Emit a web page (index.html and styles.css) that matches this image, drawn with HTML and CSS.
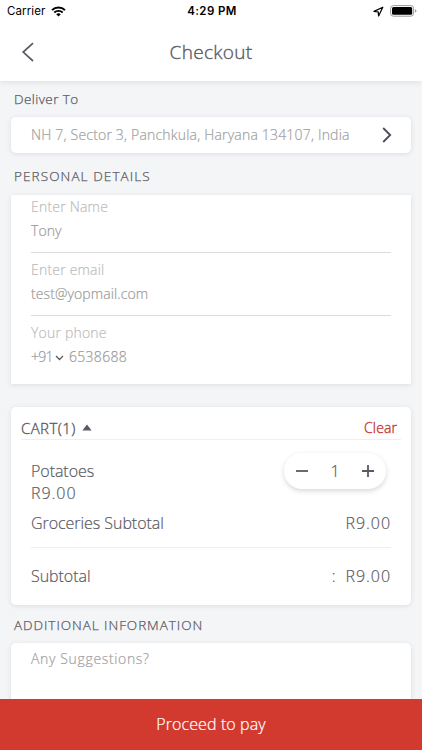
FILE: index.html
```
<!DOCTYPE html>
<html lang="en">
<head>
<meta charset="utf-8">
<meta name="viewport" content="width=device-width, initial-scale=1">
<title>Checkout</title>
<link rel="stylesheet" href="styles.css">
</head>
<body>
<div class="screen">
  <header class="header">
    <div class="status">
      <div class="status-left"><span class="carrier">Carrier</span>
        <svg class="wifi" width="15" height="11" viewBox="0 0 15 11"><path d="M1 4.1a9.2 9.2 0 0 1 13 0" fill="none" stroke="#000" stroke-width="2"/><path d="M3.3 6.5a6 6 0 0 1 8.4 0" fill="none" stroke="#000" stroke-width="1.8"/><path d="M5.2 8.3a3.3 3.3 0 0 1 4.6 0L7.5 10.6z"/></svg>
      </div>
      <div class="time">4:29 PM</div>
      <div class="status-right">
        <svg width="11" height="11" viewBox="0 0 11 11"><path d="M9.8 1.2L1 5.4l4.2.5.4 4.1z" fill="none" stroke="#000" stroke-width="1.2" stroke-linejoin="round"/></svg>
        <svg width="27" height="12" viewBox="0 0 27 12"><rect x=".6" y=".6" width="23" height="10.6" rx="2.8" fill="#fff" stroke="#999"/><rect x="2" y="2" width="20.2" height="7.8" rx="1.5"/><path d="M25 4.2q1.5.5 1.5 1.7T25 7.6z" fill="#999"/></svg>
      </div>
    </div>
    <div class="nav">
      <svg class="back" width="14" height="20" viewBox="0 0 14 20"><path d="M12 1.2L2.2 10.1 12 19" fill="none" stroke="#5a5963" stroke-width="1.7"/></svg>
      <h1 class="title">Checkout</h1>
    </div>
  </header>

  <main class="content">
    <h2 class="section deliver">Deliver To</h2>
    <div class="card address">
      <span class="address-text">NH 7, Sector 3, Panchkula, Haryana 134107, India</span>
      <svg width="10" height="16" viewBox="0 0 10 16"><path d="M1.2 1L8.2 8 1.2 15" fill="none" stroke="#4d4c56" stroke-width="1.8"/></svg>
    </div>

    <h2 class="section personal">PERSONAL DETAILS</h2>
    <div class="card details">
      <div class="field"><div class="label">Enter Name</div><div class="value">Tony</div></div>
      <div class="field"><div class="label">Enter email</div><div class="value">test@yopmail.com</div></div>
      <div class="field"><div class="label">Your phone</div>
        <div class="value phone"><span class="code">+91</span><svg width="9" height="6" viewBox="0 0 9 6"><path d="M1 1l3.5 3.5L8 1" fill="none" stroke="#5a5963" stroke-width="1.3"/></svg><span class="number">6538688</span></div>
      </div>
    </div>

    <div class="card cart">
      <div class="cart-head">
        <span class="cart-title">CART(1)</span>
        <svg width="10" height="7" viewBox="0 0 10 7"><path d="M5 .4L9.6 6.4H.4z" fill="#5a5963"/></svg>
        <span class="clear">Clear</span>
      </div>
      <div class="item">
        <div><div class="item-name">Potatoes</div><div class="price">R9.00</div></div>
        <div class="stepper">
          <svg width="12" height="12" viewBox="0 0 12 12"><path d="M0 6h12" stroke="#5a5963" stroke-width="1.8"/></svg>
          <span>1</span>
          <svg width="12" height="12" viewBox="0 0 12 12"><path d="M0 6h12M6 0v12" stroke="#5a5963" stroke-width="1.8"/></svg>
        </div>
      </div>
      <div class="row groceries"><span>Groceries Subtotal</span><span class="price">R9.00</span></div>
      <div class="row total"><span>Subtotal</span><span class="colon">:</span><span class="price">R9.00</span></div>
    </div>

    <h2 class="section additional">ADDITIONAL INFORMATION</h2>
    <div class="card notes">Any Suggestions?</div>
  </main>
  <footer class="pay"><span>Proceed to pay</span></footer>
</div>
</body>
</html>
```
FILE: styles.css
```
* { box-sizing: border-box; }
body { margin: 0; }
.screen {
  width: 422px;
  height: 750px;
  display: flex;
  flex-direction: column;
  overflow: hidden;
  background: #f4f5f7;
  color: #5a5963;
  font: 300 14px/24px "Open Sans", "Noto Sans", sans-serif;
  -webkit-text-stroke: .2px currentColor;
  white-space: nowrap;
}
svg { display: block; flex: none; }
h1, h2 { margin: 0; font-weight: 300; }

.header {
  position: relative;
  height: 81px;
  flex: none;
  background: #fff;
  box-shadow: 0 1px 6px rgba(60, 60, 70, .13);
}
.status {
  display: grid;
  grid-template-columns: 1fr auto 1fr;
  height: 22px;
  padding: 0 5px 0 7px;
  align-items: center;
  color: #000;
  font: 400 11.5px/22px Inter, sans-serif;
  -webkit-text-stroke: 0;
}
.status-left, .status-right { display: flex; align-items: center; }
.status-left { gap: 6px; }
.status-right { justify-content: flex-end; gap: 6px; }
.carrier { letter-spacing: .1px; }
.time { font-weight: 600; letter-spacing: .4px; }
.nav {
  display: grid;
  grid-template-columns: 48px 1fr 48px;
  align-items: center;
  height: 59px;
}
.back { margin-left: 21px; }
.title {
  text-align: center;
  font-size: 19px;
  line-height: 30px;
  letter-spacing: .3px;
  -webkit-text-stroke-width: .35px;
}

.content { flex: 1; min-height: 0; overflow: hidden; padding: 0 11px; }
.section { padding-left: 3px; font-size: 13.5px; line-height: 24px; -webkit-text-stroke-width: .25px; }
.deliver { padding-top: 6px; height: 36px; letter-spacing: .42px; }
.personal { padding-top: 11px; height: 42px; letter-spacing: 1.1px; }
.additional { padding-top: 8px; height: 38px; letter-spacing: .95px; }

.card {
  background: #fff;
  border-radius: 5px;
  box-shadow: 0 1px 5px rgba(60, 60, 70, .12);
}
.address {
  height: 36px;
  display: flex;
  align-items: center;
  justify-content: space-between;
  padding: 0 19px 0 20px;
  color: #a0a0a0;
}
.address-text { letter-spacing: .19px; }
.details { height: 189px; padding: 0 20px; border-radius: 0; }
.field { height: 63px; border-bottom: 1px solid #dcdcdc; }
.field:first-child { height: 58px; }
.field:last-child { border-bottom: 0; }
.label { height: 29px; padding-top: 5px; color: #bcbcbc; letter-spacing: .2px; }
.field:first-child .label { height: 24px; padding-top: 0; }
.value { color: #9a9a9a; letter-spacing: .1px; }
.phone { display: flex; align-items: center; }
.code { width: 22px; letter-spacing: -.8px; }
.number { letter-spacing: .3px; }
.phone svg { margin: 2px 5px 0 2px; }

.cart { height: 198px; margin-top: 23px; padding: 0 20px; font-size: 16px; letter-spacing: -.05px; }
.cart-head {
  display: flex;
  align-items: center;
  height: 33px;
  margin: 0 -10px;
  padding: 9px 4px 0 0;
  border-bottom: 1px solid #efefef;
}
.cart-title { font-size: 15px; letter-spacing: .4px; -webkit-text-stroke-width: .35px; }
.cart-head svg { margin-left: 6px; }
.clear { margin-left: auto; color: #c8362c; font-size: 14px; letter-spacing: .1px; -webkit-text-stroke-width: .35px; }
.item {
  display: flex;
  justify-content: space-between;
  height: 65px;
  padding-top: 20px;
  line-height: 22px;
}
.stepper {
  display: flex;
  align-items: center;
  justify-content: space-between;
  width: 102px;
  height: 36px;
  margin: -7px 5px 0 0;
  padding: 0 12px;
  border-radius: 18px;
  box-shadow: 0 2px 5px rgba(60, 60, 70, .2);
}
.row { display: flex; align-items: center; }
.groceries { height: 43px; padding-bottom: 6px; justify-content: space-between; border-bottom: 1px solid #ededed; }
.total { height: 56px; }
.price { letter-spacing: .95px; }
.colon { margin-left: auto; margin-right: 10px; }
.notes { height: 70px; padding: 4px 20px; color: #9f9fa2; letter-spacing: .65px; }
.pay {
  height: 51px;
  flex: none;
  background: #d33a2f;
  color: #fff;
  text-align: center;
  font-size: 16px;
  line-height: 50px;
  letter-spacing: .1px;
  position: relative;
}
```
